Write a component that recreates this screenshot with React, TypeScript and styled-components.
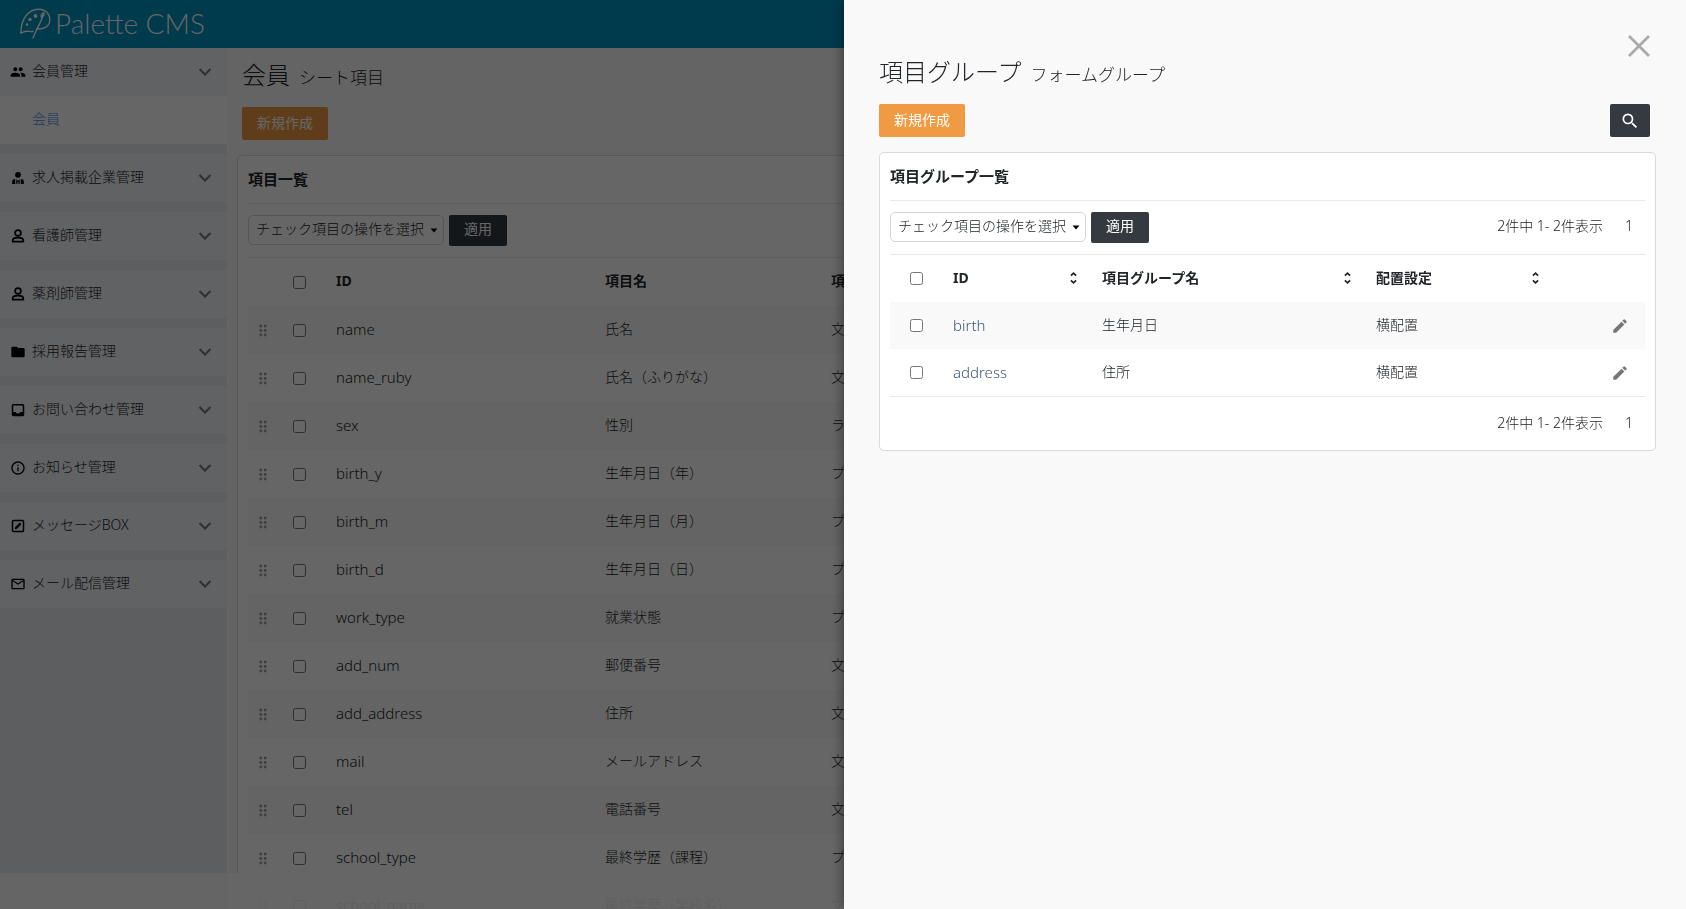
import React from "react";
import styled, { createGlobalStyle, css } from "styled-components";
import { MdPeople, MdFolder, MdInfoOutline, MdMailOutline, MdSearch } from "react-icons/md";

const Global = createGlobalStyle`
  * { box-sizing: border-box; }
  html, body, #root { height: 100%; }
  body {
    margin: 0;
    overflow: hidden;
    background: #f9f9f9;
    color: #212529;
    font: 300 14px/20px "Noto Sans", "Noto Sans CJK JP", sans-serif;
  }
  button, select, input { font: inherit; color: inherit; margin: 0; }
  h1, h2 { margin: 0; }
`;

const Page = styled.div`
  height: 100%;
  display: flex;
  flex-direction: column;
  overflow: hidden;
`;

const Header = styled.header`
  flex: none;
  display: flex;
  align-items: center;
  gap: 3px;
  height: 48px;
  padding: 0 20px;
  background: #0091c0;
  color: #fff;
`;

const LogoText = styled.span`
  font: 300 28px/44px Lato, sans-serif;
  padding-bottom: 2px;
`;

const Body = styled.div`
  flex: 1;
  min-height: 0;
  display: flex;
`;

const Sidebar = styled.nav`
  flex: none;
  width: 227px;
  background: #e9ebef;
  display: flex;
  flex-direction: column;
  gap: 10px;
`;

const MenuButton = styled.button`
  display: flex;
  align-items: center;
  gap: 6px;
  width: 100%;
  height: 48px;
  padding: 0 15px 0 10px;
  border: 0;
  background: #f2f4f7;
  text-align: left;
  svg { flex: none; color: #000; }
`;

const MenuLabel = styled.span`
  flex: 1;
  padding-bottom: 2px;
`;

const SubLink = styled.a`
  display: flex;
  align-items: center;
  height: 48px;
  padding: 0 0 2px 32px;
  background: #fff;
  color: #4a8fe0;
  text-decoration: none;
`;

const Main = styled.main`
  flex: 1;
  min-width: 0;
  padding: 11px 10px 0;
`;

const Title = styled.h1`
  display: flex;
  align-items: baseline;
  gap: 9px;
  padding-left: 5px;
  font-size: 24px;
  font-weight: 300;
  line-height: 32px;
  small { font-size: 17px; }
`;

const Actions = styled.div<{ $inset?: boolean }>`
  display: flex;
  justify-content: space-between;
  padding: 13px 6px 15px ${(p) => (p.$inset ? 5 : 0)}px;
`;

const solid = css`
  border: 0;
  border-radius: 2px;
  color: #fff;
  font-weight: 400;
`;

const CreateButton = styled.button`
  ${solid}
  height: 33px;
  padding: 0 15px 2px;
  background: #f09a41;
`;

const SearchButton = styled.button`
  ${solid}
  display: flex;
  align-items: center;
  justify-content: center;
  width: 40px;
  height: 33px;
  padding: 0;
  background: #343a40;
`;

const ApplyButton = styled.button`
  ${solid}
  height: 31px;
  padding: 0 15px 2px;
  background: #343a40;
`;

const Card = styled.section`
  border: 1px solid #d9dadb;
  border-radius: 5px;
  background: #fff;
  padding: 0 10px;
`;

const CardTitle = styled.h2`
  font-size: 15px;
  font-weight: 700;
  line-height: 47px;
  border-bottom: 1px solid #e8e9ea;
`;

const Toolbar = styled.div`
  display: flex;
  align-items: center;
  gap: 5px;
  height: 53px;
  padding-bottom: 1px;
`;

const SelectWrap = styled.label`
  position: relative;
  width: 196px;
  svg { position: absolute; right: 6px; top: 13px; pointer-events: none; }
`;

const Select = styled.select`
  appearance: none;
  width: 100%;
  height: 30px;
  padding: 0 16px 2px 7px;
  border: 1px solid #d5d6d8;
  border-radius: 5px;
  background: #fff;
  display: block;
`;

const Pager = styled.div`
  display: flex;
  gap: 22px;
  margin-left: auto;
  padding: 0 12px 2px 0;
`;

const CardFoot = styled.div`
  display: flex;
  align-items: center;
  height: 53px;
`;

const Table = styled.table<{ $row: number }>`
  width: 100%;
  table-layout: fixed;
  border-collapse: separate;
  border-spacing: 0;
  border-top: 1px solid #e8e9ea;
  border-bottom: 1px solid #e8e9ea;
  th, td {
    height: ${(p) => p.$row}px;
    padding: 0 12px 2px;
    text-align: left;
    white-space: nowrap;
    vertical-align: middle;
  }
  th { font-weight: 700; }
  tbody tr:nth-child(odd) { background: #f9f9f9; }
`;

const HeadCell = styled.div`
  display: flex;
  align-items: center;
  justify-content: space-between;
`;

const SortButton = styled.button`
  display: flex;
  padding: 0;
  border: 0;
  background: none;
`;

const CheckCell = styled.td<{ $pad: number }>`
  && { padding: 0 0 0 ${(p) => p.$pad}px; }
`;

const Check = styled.input.attrs({ type: "checkbox" })`
  display: block;
  width: 13px;
  height: 13px;
`;

const HandleCell = styled.td`
  && { padding: 0 0 0 11px; }
  svg { display: block; }
`;

const IdCell = styled.td`
  font-size: 15px;
`;

const EditCell = styled.td`
  && { padding: 0 16px 0 0; }
`;

const EditButton = styled.button`
  display: block;
  margin-left: auto;
  padding: 0;
  border: 0;
  background: none;
  color: #777;
  svg { display: block; }
`;

const IdLink = styled.a`
  color: #3d5678;
  text-decoration: none;
`;

const Footer = styled.footer`
  position: fixed;
  left: 0;
  right: 0;
  bottom: 0;
  height: 36px;
  background: rgba(255, 255, 255, 0.9);
`;

const Overlay = styled.div`
  position: fixed;
  inset: 0;
  background: rgba(0, 0, 0, 0.6);
`;

const Drawer = styled.aside`
  position: fixed;
  top: 0;
  right: 0;
  bottom: 0;
  width: calc(50% - 1px);
  padding: 56px 30px 0 35px;
  background: #f9f9f9;
  box-shadow: 0 0 12px rgba(0, 0, 0, 0.5);
`;

const DrawerTitle = styled(Title)`
  padding-left: 0;
`;

const CloseButton = styled.button`
  position: absolute;
  top: 34px;
  right: 35px;
  padding: 0;
  border: 0;
  background: none;
  svg { display: block; }
`;

const Logo = () => (
  <svg width="32" height="32" viewBox="0 0 32 32" fill="none" stroke="#fff" strokeWidth="1.4" strokeLinecap="round">
    <path d="M1 25C.5 12 8 1.200 18.500 1.200c7.300 0 11.300 4.800 11.300 10.300 0 6.500-5.300 10-13.300 9.500" />
    <path d="M22.500 9C20.500 15 16.500 21 13 30" />
    <path d="M1 25c2.500-.8 3.500-1.800 6-1.800 2 0 3.500.8 6 .3" />
    <path d="M21 9.500c-.8-3 .8-4 3-5.500.5 2.500.5 4.500-1.500 5.500z" fill="#fff" strokeWidth="0.8" />
    <circle cx="15.500" cy="8" r="1.900" fill="#fff" stroke="none" />
    <circle cx="10" cy="11.500" r="1.700" fill="#fff" stroke="none" />
    <circle cx="7" cy="16.500" r="1.300" fill="#fff" stroke="none" />
  </svg>
);

const Chevron = () => (
  <svg width="14" height="8" viewBox="0 0 14 8" fill="none" stroke="#70767e" strokeWidth="2">
    <path d="M1.500 1L7 6.500 12.500 1" style={undefined} />
  </svg>
);

const Sort = () => (
  <svg width="9" height="14" viewBox="0 0 9 14" fill="none" stroke="#222" strokeWidth="1.700">
    <path d="M1.900 4.700L4.500 2.200l2.600 2.500M1.900 9.300l2.600 2.500 2.600-2.500" />
  </svg>
);

const Company = () => (
  <svg width="16" height="16" viewBox="0 0 16 16" fill="#000">
    <circle cx="8" cy="4.800" r="2.900" />
    <path d="M2.200 14v-2.500C2.200 10 3 9.300 5.200 9v5zM6.300 14V9L8 11l1.700-2v5H8.600v-2H7.400v2zM10.800 14V9c2.200.3 3 1 3 2.500V14z" />
  </svg>
);

const Person = () => (
  <svg width="16" height="16" viewBox="0 0 16 16" fill="none" stroke="#000" strokeWidth="1.700">
    <circle cx="8" cy="5" r="2.900" />
    <path d="M2.700 13.700v-1.400c0-1.700 3-2.600 5.300-2.600s5.300.9 5.300 2.600v1.400z" />
  </svg>
);

const Inbox = () => (
  <svg width="16" height="16" viewBox="0 0 16 16">
    <rect x="2.500" y="2.700" width="11" height="10.800" rx="1" fill="none" stroke="#000" strokeWidth="1.500" />
    <path d="M2.500 10h3.200c.4 1 1.300 1.600 2.300 1.600s1.900-.6 2.300-1.600h3.200v3.500h-11z" />
  </svg>
);

const Message = () => (
  <svg width="16" height="16" viewBox="0 0 16 16" fill="none" stroke="#000" strokeWidth="1.500">
    <rect x="2.500" y="2.500" width="11" height="11" rx="1" />
    <path d="M4.700 11.300l.6-2.400L9.700 4.500l1.800 1.800-4.400 4.400z" fill="#000" stroke="none" />
  </svg>
);

const Handle = () => (
  <svg width="8" height="13" viewBox="0 0 8 13" fill="#9a9da1">
    {[2, 6.500, 11].map((y) => (
      <React.Fragment key={y}>
        <circle cx="1.800" cy={y} r="1.400" />
        <circle cx="6.200" cy={y} r="1.400" />
      </React.Fragment>
    ))}
  </svg>
);

const Pencil = () => (
  <svg width="18" height="18" viewBox="0 0 24 24" fill="currentColor">
    <path d="M3 17.460v3.040c0 .28.22.5.5.5h3.040c.13 0 .26-.05.35-.15L17.810 9.940l-3.750-3.750L3.150 17.100c-.1.100-.15.220-.15.360zM20.710 7.040a1 1 0 0 0 0-1.410l-2.340-2.340a1 1 0 0 0-1.410 0l-1.830 1.830 3.750 3.750 1.830-1.830z" />
  </svg>
);

const menus = [
  { label: "会員管理", icon: <MdPeople size={16} />, sub: "会員" },
  { label: "求人掲載企業管理", icon: <Company /> },
  { label: "看護師管理", icon: <Person /> },
  { label: "薬剤師管理", icon: <Person /> },
  { label: "採用報告管理", icon: <MdFolder size={16} /> },
  { label: "お問い合わせ管理", icon: <Inbox /> },
  { label: "お知らせ管理", icon: <MdInfoOutline size={16} /> },
  { label: "メッセージBOX", icon: <Message /> },
  { label: "メール配信管理", icon: <MdMailOutline size={16} /> },
];

const fields = [
  ["name", "氏名", "文字列"],
  ["name_ruby", "氏名（ふりがな）", "文字列"],
  ["sex", "性別", "ラジオボタン"],
  ["birth_y", "生年月日（年）", "プルダウン"],
  ["birth_m", "生年月日（月）", "プルダウン"],
  ["birth_d", "生年月日（日）", "プルダウン"],
  ["work_type", "就業状態", "プルダウン"],
  ["add_num", "郵便番号", "文字列"],
  ["add_address", "住所", "文字列"],
  ["mail", "メールアドレス", "文字列"],
  ["tel", "電話番号", "文字列"],
  ["school_type", "最終学歴（課程）", "プルダウン"],
  ["school_name", "最終学歴（学校名）", "文字列"],
];

const groups = [
  ["birth", "生年月日", "横配置"],
  ["address", "住所", "横配置"],
];

const BulkActions = () => (
  <>
    <SelectWrap>
      <Select aria-label="チェック項目の操作">
        <option>チェック項目の操作を選択</option>
      </Select>
      <svg width="8" height="5" viewBox="0 0 8 5"><path d="M0.500 0.500h7L4 4.500z" fill="#000" /></svg>
    </SelectWrap>
    <ApplyButton>適用</ApplyButton>
  </>
);

const Count = () => (
  <Pager>
    <span>2件中 1- 2件表示</span>
    <span>1</span>
  </Pager>
);

const SortHead = ({ label }: { label: string }) => (
  <th>
    <HeadCell>
      {label}
      <SortButton aria-label={`${label}で並べ替え`}><Sort /></SortButton>
    </HeadCell>
  </th>
);

export default function App() {
  return (
    <Page>
      <Global />
      <Header>
        <Logo />
        <LogoText>Palette CMS</LogoText>
      </Header>
      <Body>
        <Sidebar>
          {menus.map((m) => (
            <div key={m.label}>
              <MenuButton>
                {m.icon}
                <MenuLabel>{m.label}</MenuLabel>
                <Chevron />
              </MenuButton>
              {m.sub && <SubLink href="#">{m.sub}</SubLink>}
            </div>
          ))}
        </Sidebar>
        <Main>
          <Title>会員 <small>シート項目</small></Title>
          <Actions $inset>
            <CreateButton>新規作成</CreateButton>
          </Actions>
          <Card>
            <CardTitle>項目一覧</CardTitle>
            <Toolbar><BulkActions /></Toolbar>
            <Table $row={48}>
              <colgroup>
                <col style={{ width: 45 }} />
                <col style={{ width: 31 }} />
                <col style={{ width: 269 }} />
                <col style={{ width: 226 }} />
                <col />
              </colgroup>
              <thead>
                <tr>
                  <th />
                  <CheckCell as="th" $pad={0}><Check aria-label="すべて選択" /></CheckCell>
                  <th>ID</th>
                  <th>項目名</th>
                  <th>項目タイプ</th>
                </tr>
              </thead>
              <tbody>
                {fields.map(([id, name, type]) => (
                  <tr key={id}>
                    <HandleCell><Handle /></HandleCell>
                    <CheckCell $pad={0}><Check aria-label={id} /></CheckCell>
                    <IdCell>{id}</IdCell>
                    <td>{name}</td>
                    <td>{type}</td>
                  </tr>
                ))}
              </tbody>
            </Table>
          </Card>
        </Main>
      </Body>
      <Footer />
      <Overlay />
      <Drawer>
        <CloseButton aria-label="閉じる">
          <svg width="24" height="24" viewBox="0 0 24 24" stroke="#aaa" strokeWidth="2.800">
            <path d="M2 2l20 20M22 2L2 22" />
          </svg>
        </CloseButton>
        <DrawerTitle>項目グループ <small>フォームグループ</small></DrawerTitle>
        <Actions>
          <CreateButton>新規作成</CreateButton>
          <SearchButton aria-label="検索"><MdSearch size={20} /></SearchButton>
        </Actions>
        <Card>
          <CardTitle>項目グループ一覧</CardTitle>
          <Toolbar>
            <BulkActions />
            <Count />
          </Toolbar>
          <Table $row={47}>
            <colgroup>
              <col style={{ width: 51 }} />
              <col style={{ width: 149 }} />
              <col style={{ width: 274 }} />
              <col style={{ width: 188 }} />
              <col />
            </colgroup>
            <thead>
              <tr>
                <CheckCell as="th" $pad={20}><Check aria-label="すべて選択" /></CheckCell>
                <SortHead label="ID" />
                <SortHead label="項目グループ名" />
                <SortHead label="配置設定" />
                <th />
              </tr>
            </thead>
            <tbody>
              {groups.map(([id, name, layout]) => (
                <tr key={id}>
                  <CheckCell $pad={20}><Check aria-label={id} /></CheckCell>
                  <IdCell><IdLink href="#">{id}</IdLink></IdCell>
                  <td>{name}</td>
                  <td>{layout}</td>
                  <EditCell>
                    <EditButton aria-label={`${id}を編集`}><Pencil /></EditButton>
                  </EditCell>
                </tr>
              ))}
            </tbody>
          </Table>
          <CardFoot><Count /></CardFoot>
        </Card>
      </Drawer>
    </Page>
  );
}
